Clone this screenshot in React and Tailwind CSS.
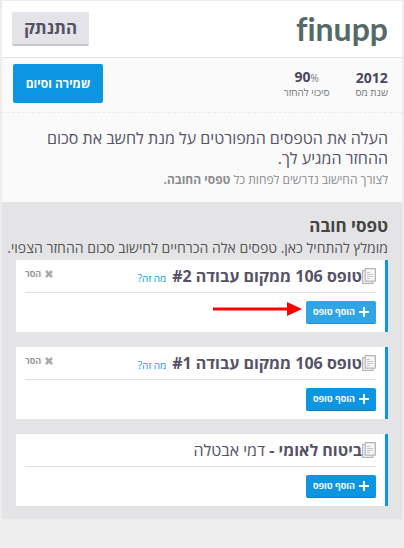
import React from "react";

const forms = [
  { id: "106-2", title: "טופס 106 ממקום עבודה #2", help: true, removable: true, active: true },
  { id: "106-1", title: "טופס 106 ממקום עבודה #1", help: true, removable: true },
  { id: "btl", title: "ביטוח לאומי -", detail: "דמי אבטלה" },
];

function DocIcon() {
  return (
    <svg className="w-[14px] h-4 shrink-0" viewBox="0 0 14 16" fill="none" aria-hidden="true">
      <path d="M2.5 2.7H.7v12.6h10.1v-1.8" stroke="#b4b4bc" strokeWidth="1.3" />
      <path d="M3.2.7h10.1v12.4H3.2z" fill="#f7f7f8" stroke="#b4b4bc" strokeWidth="1.3" />
      <path d="M5 4.5h3M5 6.5h6M5 8.5h6M5 10.5h3" stroke="#c4c4ca" />
    </svg>
  );
}

function PlusIcon() {
  return (
    <svg className="w-[10px] h-[10px] shrink-0" viewBox="0 0 10 10" aria-hidden="true">
      <path d="M5 0v10M0 5h10" stroke="white" strokeWidth="2" />
    </svg>
  );
}

function CrossIcon() {
  return (
    <svg className="w-2 h-2 shrink-0" viewBox="0 0 8 8" aria-hidden="true">
      <path d="M1 1l6 6M7 1L1 7" stroke="#aaa" strokeWidth="2.6" />
    </svg>
  );
}

function Arrow() {
  return (
    <svg className="absolute top-0 right-full mr-1 w-[89px] h-4" viewBox="0 0 89 16" aria-hidden="true">
      <path d="M0 8h76" stroke="#f00" strokeWidth="3" />
      <path d="M74 1l15 7-15 7z" fill="#f00" />
    </svg>
  );
}

function FormCard({ form }) {
  return (
    <li className="bg-white border-r-3 border-[#0c96e2] pr-[9px] pl-[9px] pb-2">
      <div className="flex justify-between border-b border-[#e2e2e4] h-[33px]">
        <div className="flex items-center">
          <DocIcon />
          <h3 className="text-[16px] leading-6 font-bold text-[#555265]">
            {form.title}
            {form.detail && <span className="font-normal"> {form.detail}</span>}
          </h3>
          {form.help && (
            <a href="#help" className="text-[10px] leading-4 text-[#0c96e2] mr-[6px] mt-1">מה זה?</a>
          )}
        </div>
        {form.removable && (
          <button className="flex items-center gap-1 h-7 text-[9px] font-bold text-[#999]">
            <CrossIcon />
            הסר
          </button>
        )}
      </div>
      <div className="relative w-fit mt-2">
        <button
          className={`flex items-center justify-center gap-1 w-[70px] h-[23px] rounded-xs border-b text-[9px] font-bold text-white ${
            form.active ? "bg-[#30a5e5] border-[#2590cb]" : "bg-[#0c96e2] border-[#0a80c2]"
          }`}
        >
          <PlusIcon />
          הוסף טופס
        </button>
        {form.active && <Arrow />}
      </div>
    </li>
  );
}

function App() {
  return (
    <div dir="rtl" className="min-h-screen bg-[#ededed] pt-px px-[2px] font-['Open_Sans','DejaVu_Sans',sans-serif]">
      <header className="flex items-center justify-between h-[57px] bg-white border-b border-[#e2e2e4] pr-[14px] pl-[10px]">
        <a
          href="#home"
          dir="ltr"
          className="font-['Lato',sans-serif] text-[32px] leading-10 font-bold text-[#546968] [font-variant-ligatures:none]"
        >
          finupp
        </a>
        <button className="h-[34px] w-[77px] rounded-xs bg-[#e4e3e8] border-b-2 border-[#c6c6cb] text-[17px] font-bold text-[#555265]">
          התנתק
        </button>
      </header>

      <main>
        <div className="flex items-start justify-between h-[55px] bg-[#fafafa] border-b border-dashed border-[#ebebeb] pr-[14px] pl-[11px] pt-[6px]">
          <dl className="flex gap-[26px] pt-[6px] text-center">
            <div className="flex flex-col-reverse">
              <dt className="text-[10px] leading-[14px] text-[#777]">שנת מס</dt>
              <dd className="text-[14px] leading-[14px] font-bold text-[#4a475b]">2012</dd>
            </div>
            <div className="flex flex-col-reverse">
              <dt className="text-[10px] leading-[14px] text-[#777]">סיכוי להחזר</dt>
              <dd dir="ltr" className="text-[14px] leading-[14px] font-bold text-[#4a475b]">
                90<span className="text-[10px] font-normal text-[#777]">%</span>
              </dd>
            </div>
          </dl>
          <button className="h-[39px] w-[90px] rounded-xs bg-[#0c96e2] text-[12px] font-bold text-white">
            שמירה וסיום
          </button>
        </div>

        <section className="bg-[#fafafa] px-[14px] pt-[15px] pb-3">
          <h1 className="text-[16px] leading-5 text-[#555265]">
            העלה את הטפסים המפורטים על מנת לחשב את סכום ההחזר המגיע לך.
          </h1>
          <p className="mt-[2px] text-[12px] leading-5 text-[#8c8c8c]">
            לצורך החישוב נדרשים לפחות כל <b>טפסי החובה.</b>
          </p>
        </section>

        <section className="bg-[#e4e4e6] pt-3 pb-[13px]">
          <h2 className="px-[14px] text-[17px] leading-6 font-bold text-[#444]">טפסי חובה</h2>
          <p className="pr-[14px] text-[14px] leading-5 text-[#555]">
            מומלץ להתחיל כאן. טפסים אלה הכרחיים לחישוב סכום ההחזר הצפוי.
          </p>
          <ul className="flex flex-col gap-[15px] mt-[2px] px-[14px]">
            {forms.map((form) => (
              <FormCard key={form.id} form={form} />
            ))}
          </ul>
        </section>
      </main>
    </div>
  );
}

export default App;
